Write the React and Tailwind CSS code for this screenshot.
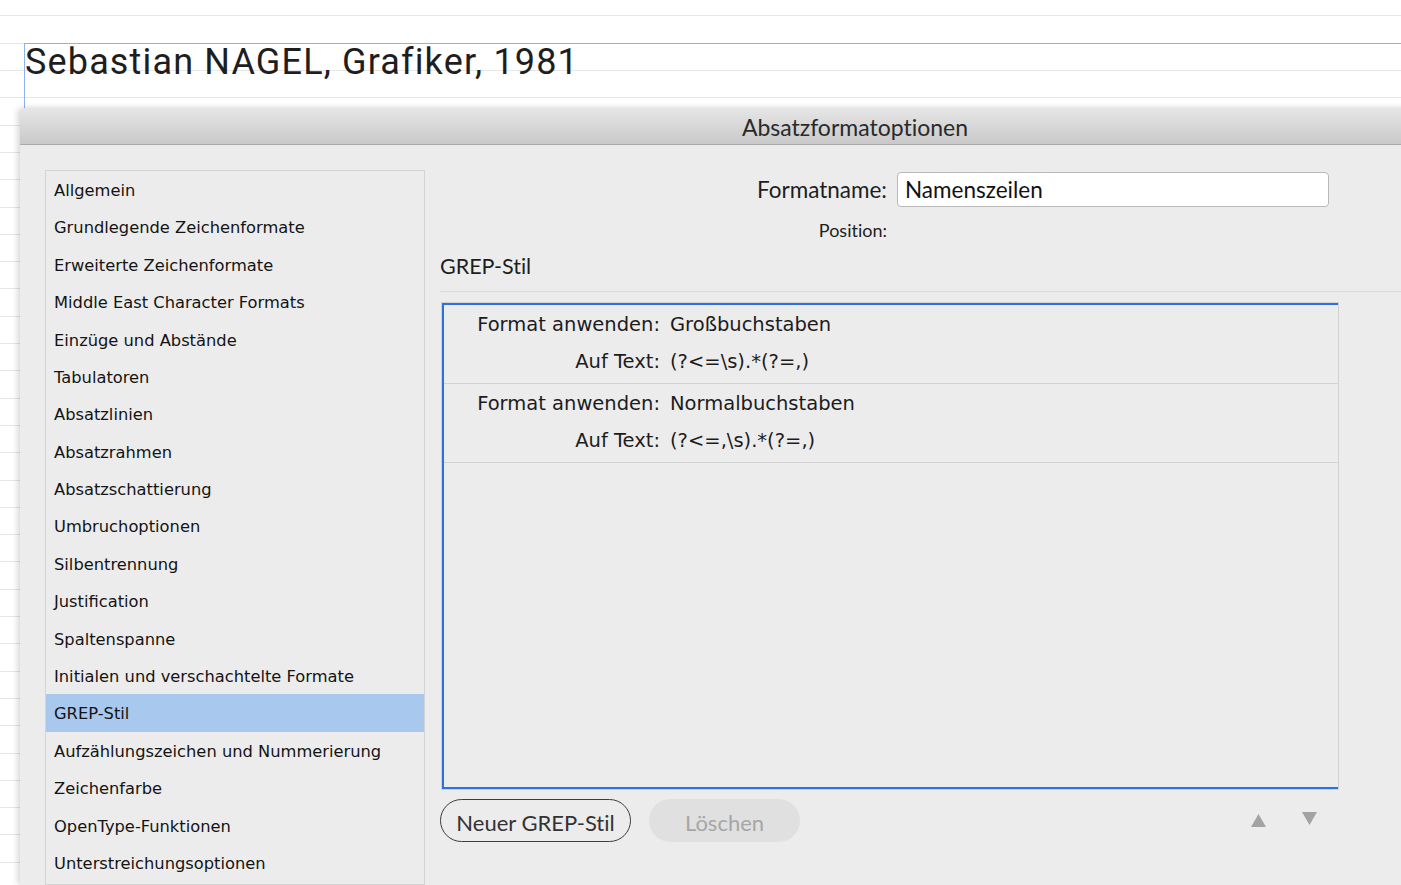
import React from "react";

const sections = [
  "Allgemein",
  "Grundlegende Zeichenformate",
  "Erweiterte Zeichenformate",
  "Middle East Character Formats",
  "Einzüge und Abstände",
  "Tabulatoren",
  "Absatzlinien",
  "Absatzrahmen",
  "Absatzschattierung",
  "Umbruchoptionen",
  "Silbentrennung",
  "Justification",
  "Spaltenspanne",
  "Initialen und verschachtelte Formate",
  "GREP-Stil",
  "Aufzählungszeichen und Nummerierung",
  "Zeichenfarbe",
  "OpenType-Funktionen",
  "Unterstreichungsoptionen",
];

const grepStyles = [
  { format: "Großbuchstaben", pattern: "(?<=\\s).*(?=,)" },
  { format: "Normalbuchstaben", pattern: "(?<=,\\s).*(?=,)" },
];

const ui = "font-['Lato','Open_Sans',sans-serif] [font-variant-ligatures:none]";
const mac = "font-['DejaVu_Sans','Noto_Sans',sans-serif]";

function GrepRow({ format, pattern }) {
  return (
    <div className={`${mac} flex h-[79px] flex-col border-b border-[#d2d2d2] pt-[1px] text-[19.5px] text-[#1c1c1c]`}>
      <div className="flex h-[37px] items-center">
        <span className="w-[216px] text-right">Format anwenden:</span>
        <span className="ml-[10px]">{format}</span>
      </div>
      <div className="flex h-[37px] items-center">
        <span className="w-[216px] text-right">Auf Text:</span>
        <span className="ml-[10px]">{pattern}</span>
      </div>
    </div>
  );
}

export default function App() {
  const selected = "GREP-Stil";

  return (
    <div className="h-[885px] w-full overflow-hidden bg-white bg-[repeating-linear-gradient(180deg,transparent_0px,transparent_15.5px,#e6e6e6_15.5px,#e6e6e6_16.5px,transparent_16.5px,transparent_27.3px)]">
      {/* text frame on the page */}
      <div className="ml-[24px] mt-[43px] h-[65px] border-l border-t border-[#8db2ef]">
        <div className="-mt-[1px] font-['Roboto',sans-serif] text-[36px] leading-[38px] tracking-[1.15px] text-[#1e1e1e]">
          Sebastian NAGEL, Grafiker, 1981
        </div>
      </div>

      {/* dialog */}
      <div className="ml-[20px] w-[1670px] rounded-t-[5px] bg-[#ececec] shadow-[-2px_0_6px_rgba(0,0,0,0.18)]">
        <div className={`${ui} flex h-[37px] items-center justify-center rounded-t-[5px] border-b border-[#a9a9a9] bg-gradient-to-b from-[#e6e6e6] to-[#c9c9c9] pt-[3px] text-[23px] text-[#2a2a2a]`}>
          Absatzformatoptionen
        </div>

        <div className="flex h-[740px] pl-[25px] pt-[25px]">
          {/* section list */}
          <div className="w-[380px] border border-[#d4d4d4] bg-[#ececec]">
            {sections.map((s) => (
              <div
                key={s}
                className={`${mac} flex h-[37.4px] items-center pl-[8px] pt-[3px] text-[16.3px] text-[#141414] ${
                  s === selected ? "bg-[#a8c8ee]" : ""
                }`}
              >
                {s}
              </div>
            ))}
          </div>

          {/* options pane */}
          <div className="ml-[15px] flex flex-1 flex-col">
            <div className={`${ui} mt-[2px] flex items-center`}>
              <span className="w-[447px] text-right text-[22.5px] text-[#1e1e1e]">Formatname:</span>
              <div className="ml-[10px] flex h-[35px] w-[432px] items-center rounded-[4px] border border-[#b9b9b9] bg-white px-[7px] text-[22.5px] text-[#111]">
                Namenszeilen
              </div>
            </div>

            <div className={`${ui} mt-[13px] flex h-[20px] items-center`}>
              <span className="w-[447px] text-right text-[18px] text-[#1e1e1e]">Position:</span>
            </div>

            <div className={`${ui} mt-[14px] flex h-[24px] items-center text-[21.5px] text-[#1e1e1e]`}>GREP-Stil</div>

            <div className="mt-[13px] h-px bg-[#d9d9d9]" />

            <div className="ml-[1px] mt-[10px] h-[488px] w-[898px] border border-[#d2d2d2]">
              <div className="h-full border-b-2 border-l-2 border-t-2 border-[#2f6fe4]">
                {grepStyles.map((g) => (
                  <GrepRow key={g.format} {...g} />
                ))}
              </div>
            </div>

            <div className="mt-[9px] flex w-[899px] items-center">
              <button className={`${ui} h-[43px] w-[191px] rounded-full border-[1.5px] border-[#3c3c3c] pt-[3px] text-[22px] text-[#333]`}>
                Neuer GREP-Stil
              </button>
              <button className={`${ui} ml-[18px] h-[43px] w-[151px] rounded-full bg-[#e0e0e0] pt-[3px] text-[22px] text-[#a6a6a6]`}>
                Löschen
              </button>
              <div className="ml-auto mr-[22px] flex items-center gap-[36px]">
                <svg width="15" height="13" viewBox="0 0 15 13">
                  <polygon points="7.5,0 15,13 0,13" fill="#a3a3a3" />
                </svg>
                <svg width="15" height="13" viewBox="0 0 15 13" className="-mt-[4px]">
                  <polygon points="0,0 15,0 7.5,13" fill="#a3a3a3" />
                </svg>
              </div>
            </div>
          </div>
        </div>
      </div>
    </div>
  );
}
